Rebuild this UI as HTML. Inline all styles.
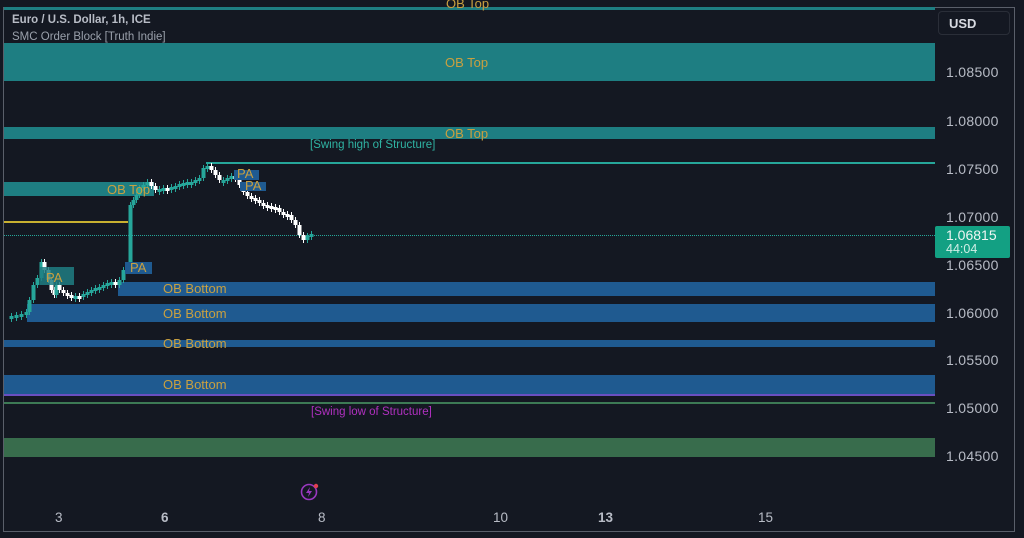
<!DOCTYPE html>
<html><head><meta charset="utf-8"><style>
body{margin:0;width:1024px;height:538px;background:#141822;overflow:hidden;position:relative;font-family:"Liberation Sans",sans-serif}
.a{position:absolute}
.t{background:#1e7e82}
.b{background:#1f5a90}
.lbl{position:absolute;color:#c9a040;font-size:13px;white-space:nowrap}
.px{position:absolute;left:946px;color:#b8bcc6;font-size:14px;letter-spacing:.3px}
.tm{position:absolute;top:510px;color:#b8bcc6;font-size:13.5px}
</style></head><body>
<div class="a" style="left:3px;top:7px;width:1012px;height:525px;border:1.5px solid #5a5f6a;box-sizing:border-box"></div>
<div class="a t" style="left:4px;top:7px;width:931px;height:3px"></div>
<div class="lbl" style="left:446px;top:-4px">OB Top</div>
<div class="a" style="left:938px;top:11px;width:72px;height:24px;border:1px solid #2a2e38;border-radius:4px;box-sizing:border-box;color:#d8dbe2;font-size:13px;font-weight:bold;padding:4px 0 0 10px">USD</div>
<div class="a" style="left:12px;top:14px;color:#b8bcc6;font-size:11.5px;font-weight:bold">Euro / U.S. Dollar, 1h, ICE</div>
<div class="a" style="left:12px;top:31px;color:#9aa0ab;font-size:11.5px">SMC Order Block [Truth Indie]</div>
<div class="a t" style="left:4px;top:43px;width:931px;height:38px"></div>
<div class="lbl" style="left:445px;top:55px">OB Top</div>
<div class="a t" style="left:4px;top:127px;width:931px;height:12px"></div>
<div class="lbl" style="left:445px;top:126px">OB Top</div>
<div class="a" style="left:310px;top:139px;color:#2fb3a3;font-size:11.5px">[Swing high of Structure]</div>
<div class="a" style="left:206px;top:162px;width:729px;height:1.5px;background:#26a69a"></div>
<div class="a t" style="left:4px;top:182px;width:150px;height:14px"></div>
<div class="a" style="left:4px;top:221px;width:124px;height:1.5px;background:#c8b030"></div>
<div class="a" style="left:4px;top:235px;width:931px;border-top:1px dotted #26a69a"></div>
<div class="a b" style="left:118px;top:282px;width:817px;height:14px"></div>
<div class="lbl" style="left:163px;top:281px">OB Bottom</div>
<div class="a b" style="left:27px;top:304px;width:908px;height:18px"></div>
<div class="lbl" style="left:163px;top:306px">OB Bottom</div>
<div class="a b" style="left:4px;top:340px;width:931px;height:7px"></div>
<div class="lbl" style="left:163px;top:336px">OB Bottom</div>
<div class="a b" style="left:4px;top:375px;width:931px;height:19px"></div>
<div class="a" style="left:4px;top:394px;width:931px;height:1.5px;background:#6a4fc0"></div>
<div class="lbl" style="left:163px;top:377px">OB Bottom</div>
<div class="a" style="left:4px;top:402px;width:931px;height:2px;background:#3d7a55"></div>
<div class="a" style="left:311px;top:406px;color:#b030c0;font-size:11.5px">[Swing low of Structure]</div>
<div class="a" style="left:4px;top:438px;width:931px;height:19px;background:#386c4c"></div>
<svg class="a" style="left:0;top:0" width="940" height="340" id="c"></svg>
<div class="a b" style="left:234px;top:170px;width:25px;height:10px"></div>
<div class="lbl" style="left:237px;top:166px">PA</div>
<div class="a b" style="left:240px;top:182px;width:26px;height:9px"></div>
<div class="lbl" style="left:245px;top:178px">PA</div>
<div class="a b" style="left:125px;top:262px;width:27px;height:12px"></div>
<div class="lbl" style="left:130px;top:260px">PA</div>
<div class="a t" style="left:40px;top:267px;width:34px;height:18px;opacity:.85"></div>
<div class="lbl" style="left:46px;top:270px">PA</div>
<div class="lbl" style="left:107px;top:182px">OB Top</div>
<div class="px" style="top:64px">1.08500</div>
<div class="px" style="top:113px">1.08000</div>
<div class="px" style="top:161px">1.07500</div>
<div class="px" style="top:209px">1.07000</div>
<div class="px" style="top:257px">1.06500</div>
<div class="px" style="top:305px">1.06000</div>
<div class="px" style="top:352px">1.05500</div>
<div class="px" style="top:400px">1.05000</div>
<div class="px" style="top:448px">1.04500</div>
<div class="a" style="left:935px;top:226px;width:75px;height:32px;background:#13a083;border-radius:2px"></div>
<div class="a" style="left:946px;top:227px;color:#f0f6f4;font-size:14px">1.06815</div>
<div class="a" style="left:946px;top:242px;color:#d0eee6;font-size:12.5px">44:04</div>
<svg class="a" style="left:299px;top:481px" width="24" height="22"><circle cx="10" cy="11" r="7.5" fill="none" stroke="#9a38c0" stroke-width="1.6"/><path d="M11 6 L7 12 H10 L9 16 L13 10 H10 Z" fill="#9a38c0"/><circle cx="17" cy="5" r="2.2" fill="#e04050"/></svg>
<div class="tm" style="left:55px">3</div>
<div class="tm" style="left:161px;font-weight:bold">6</div>
<div class="tm" style="left:318px">8</div>
<div class="tm" style="left:493px">10</div>
<div class="tm" style="left:598px;font-weight:bold">13</div>
<div class="tm" style="left:758px">15</div>
<script>
var p=[[5,316],[10,316],[15,315],[20,314],[25,312],[28,300],[32,285],[36,278],[40,262],[43,270],[47,280],[50,290],[53,295],[55,285],[58,290],[62,293],[66,295],[70,296],[74,296],[78,297],[82,294],[86,292],[90,290],[94,288],[98,287],[102,285],[106,283],[110,282],[114,285],[118,280],[122,270],[126,268],[129,205],[132,200],[135,195],[138,188],[142,185],[146,182],[150,186],[154,190],[158,189],[162,188],[166,190],[170,187],[174,186],[178,184],[182,183],[186,182],[190,182],[194,180],[198,178],[202,168],[206,166],[210,170],[214,175],[218,180],[222,180],[226,178],[230,176],[234,178],[238,185],[242,192],[246,196],[250,198],[254,200],[258,203],[262,205],[266,206],[270,207],[274,208],[278,212],[282,214],[286,215],[290,220],[294,225],[298,235],[302,240],[306,236],[310,234]];
var s='';for(var i=1;i<p.length;i++){var x=p[i][0],o=p[i-1][1],c=p[i][1],up=c<=o,col=up?'#26a69a':'#ffffff',t=Math.min(o,c),h=Math.max(Math.abs(o-c),3);
s+='<line x1="'+(x+1.5)+'" x2="'+(x+1.5)+'" y1="'+(t-3)+'" y2="'+(t+h+3)+'" stroke="'+col+'" stroke-width="1"/><rect x="'+(x-0.5)+'" y="'+t+'" width="4" height="'+h+'" fill="'+col+'"/>';}
document.getElementById('c').innerHTML=s;
</script>
</body></html>
